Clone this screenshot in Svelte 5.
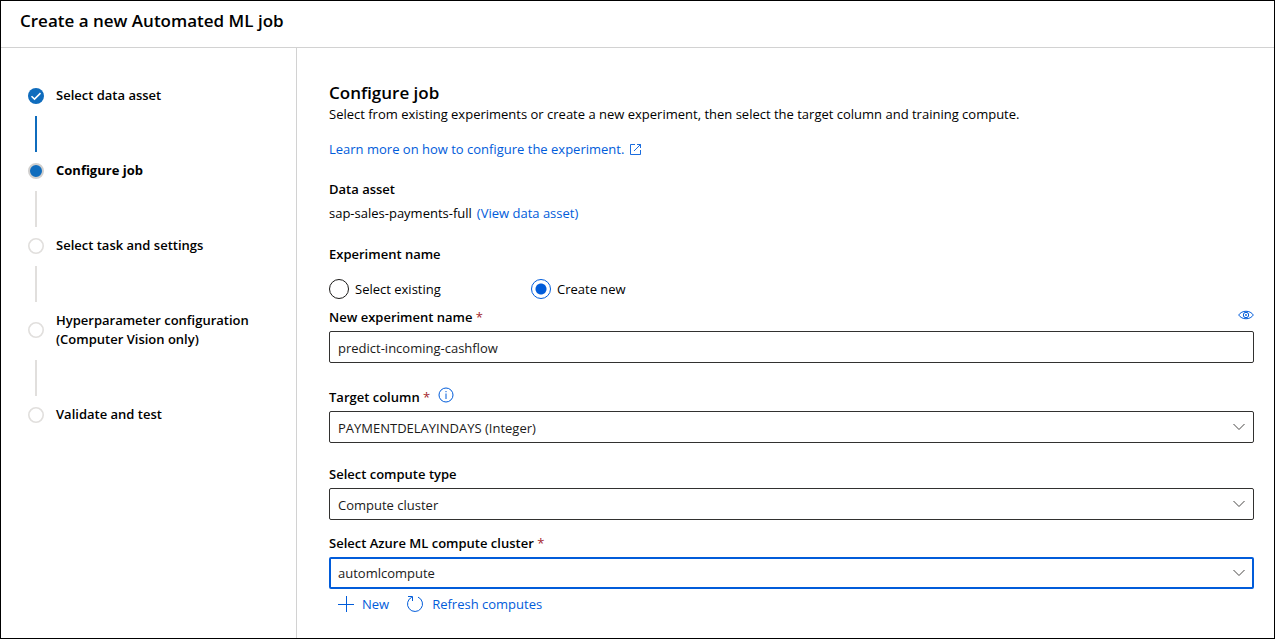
<script>
  const steps = [
    { label: 'Select data asset', state: 'done' },
    { label: 'Configure job', state: 'current' },
    { label: 'Select task and settings', state: 'todo' },
    { label: 'Hyperparameter configuration (Computer Vision only)', state: 'todo' },
    { label: 'Validate and test', state: 'todo' }
  ];

  let mode = $state('new');
  let experiment = $state('predict-incoming-cashflow');
</script>

{#snippet chevron()}
  <svg class="chevron" width="12" height="8" viewBox="0 0 12 8" aria-hidden="true">
    <path d="M0.5 1 L6 6.5 L11.5 1" fill="none" stroke="currentColor" stroke-width="1" />
  </svg>
{/snippet}

<div class="frame">
  <header><h1>Create a new Automated ML job</h1></header>
  <div class="body">
    <nav>
      <ol>
        {#each steps as step}
          <li class={step.state}>
            <div class="step">
              <svg width="16" height="16" viewBox="0 0 16 16" aria-hidden="true">
                {#if step.state === 'done'}
                  <circle cx="8" cy="8" r="8" fill="#0f6cbd" />
                  <path d="M3.5 8.3 L6.5 11.1 L12.5 5.1" fill="none" stroke="#fff" stroke-width="1.5" />
                {:else if step.state === 'current'}
                  <circle cx="8" cy="8" r="7" fill="#0f6cbd" stroke="#d0cfce" stroke-width="2" />
                {:else}
                  <circle cx="8" cy="8" r="7.2" fill="#fff" stroke="#e1dfdd" stroke-width="1.6" />
                {/if}
              </svg>
              <span>{step.label}</span>
            </div>
          </li>
        {/each}
      </ol>
    </nav>

    <main>
      <h2>Configure job</h2>
      <p>Select from existing experiments or create a new experiment, then select the target column and training compute.</p>
      <a class="learn" href="#learn">Learn more on how to configure the experiment.
        <svg width="11" height="11" viewBox="0 0 11 11" aria-hidden="true">
          <path d="M5 0.5 H0.5 V10.5 H10.5 V6 M7 0.5 H10.5 V4 M10.5 0.5 L4 7" fill="none" stroke="currentColor" stroke-width="0.9" />
        </svg>
      </a>

      <h3>Data asset</h3>
      <p class="asset">sap-sales-payments-full <a href="#asset">(View data asset)</a></p>

      <fieldset>
        <legend>Experiment name</legend>
        <div class="radios">
          <label><input type="radio" name="mode" value="existing" bind:group={mode} />Select existing</label>
          <label><input type="radio" name="mode" value="new" bind:group={mode} />Create new</label>
        </div>
      </fieldset>

      <div class="field name">
        <div class="label-row">
          <label for="experiment">New experiment name <span class="req">*</span></label>
          <button class="icon push" aria-label="Preview">
            <svg width="16" height="10" viewBox="0 0 16 10" aria-hidden="true">
              <path d="M0.7 5 C3.8 0 12.2 0 15.3 5 C12.2 10 3.8 10 0.7 5 Z" fill="none" stroke="currentColor" stroke-width="1" />
              <circle cx="8" cy="5" r="2.7" fill="none" stroke="currentColor" stroke-width="1" />
              <circle cx="8" cy="5" r="0.9" fill="currentColor" />
            </svg>
          </button>
        </div>
        <input id="experiment" type="text" bind:value={experiment} />
      </div>

      <div class="field target">
        <div class="label-row">
          <label for="target">Target column <span class="req">*</span></label>
          <button class="icon" aria-label="About the target column">
            <svg width="16" height="16" viewBox="0 0 16 16" aria-hidden="true">
              <circle cx="8" cy="8" r="7" fill="none" stroke="currentColor" stroke-width="1" />
              <path d="M8 6.5 V12 M8 4 V5.2" stroke="currentColor" stroke-width="1" />
            </svg>
          </button>
        </div>
        <div class="select">
          <select id="target"><option>PAYMENTDELAYINDAYS (Integer)</option></select>
          {@render chevron()}
        </div>
      </div>

      <div class="field type">
        <label for="type">Select compute type</label>
        <div class="select">
          <select id="type"><option>Compute cluster</option></select>
          {@render chevron()}
        </div>
      </div>

      <div class="field cluster">
        <label for="cluster">Select Azure ML compute cluster <span class="req">*</span></label>
        <div class="select">
          <select id="cluster" class="active"><option>automlcompute</option></select>
          {@render chevron()}
        </div>
      </div>

      <div class="actions">
        <button>
          <svg width="16" height="16" viewBox="0 0 16 16" aria-hidden="true">
            <path d="M8.5 0 V16 M0 8.5 H16" stroke="currentColor" stroke-width="1" />
          </svg>
          New
        </button>
        <button>
          <svg width="18" height="18" viewBox="0 0 18 18" aria-hidden="true">
            <path d="M12 2.1 A7.5 7.5 0 1 1 5.8 2.2 M2 1.5 H6.5 V6" fill="none" stroke="currentColor" stroke-width="1" />
          </svg>
          Refresh computes
        </button>
      </div>
    </main>
  </div>
</div>

<style>
  :global(body) {
    background: #fff;
  }
  .frame {
    box-sizing: border-box;
    min-height: 100vh;
    border: 1px solid #000;
    display: flex;
    flex-direction: column;
    font: 13px/20px "Open Sans", "Noto Sans", sans-serif;
    color: #000;
  }
  h1, h2, h3, p, ol, fieldset, legend {
    margin: 0;
    padding: 0;
    border: 0;
    font-size: inherit;
  }
  header {
    padding: 8px 19px 14px;
    border-bottom: 1px solid #d2d2d2;
  }
  h1, h2 {
    font-size: 17px;
    line-height: 24px;
    font-weight: 600;
  }
  .body {
    flex: 1;
    display: flex;
  }
  nav {
    box-sizing: border-box;
    flex: none;
    width: 296px;
    padding: 38px 27px;
    border-right: 1px solid #d2d2d2;
  }
  ol {
    list-style: none;
  }
  .step {
    display: flex;
    align-items: center;
    gap: 12px;
    line-height: 19px;
    font-weight: 600;
  }
  .step svg {
    flex: none;
  }
  .step span {
    max-width: 200px;
  }
  .current .step {
    font-weight: 700;
  }
  li:not(:last-child)::after {
    content: "";
    display: block;
    width: 2px;
    height: 36px;
    margin: 11px 7px 9px;
    background: #e1dfdd;
  }
  li.done::after {
    background: #0f6cbd;
  }
  main {
    flex: 1;
    min-width: 0;
    padding: 33px 20px 24px 32px;
  }
  h2 {
    line-height: 23px;
  }
  a {
    color: #015cda;
    text-decoration: none;
  }
  .learn {
    display: flex;
    align-items: center;
    gap: 6px;
    margin-top: 15px;
  }
  h3, legend, .field label {
    font-weight: 600;
  }
  h3 {
    margin-top: 20px;
  }
  .asset {
    display: flex;
    gap: 5px;
    margin-top: 4px;
  }
  fieldset {
    margin-top: 21px;
  }
  .radios {
    display: flex;
    padding-top: 15px;
  }
  .radios label {
    display: flex;
    align-items: center;
    gap: 6px;
    width: 202px;
  }
  input[type="radio"] {
    appearance: none;
    box-sizing: border-box;
    width: 20px;
    height: 20px;
    margin: 0;
    border: 1px solid #1b1a19;
    border-radius: 50%;
  }
  input[type="radio"]:checked {
    border-color: #015cda;
    background: radial-gradient(circle, #015cda 5px, transparent 6px);
  }
  .field {
    display: flex;
    flex-direction: column;
    gap: 4px;
  }
  .name {
    margin-top: 8px;
  }
  .target {
    margin-top: 24px;
  }
  .type {
    margin-top: 21px;
  }
  .cluster {
    margin-top: 13px;
  }
  .label-row {
    display: flex;
    align-items: flex-start;
    gap: 8px;
  }
  .req {
    color: #a4262c;
    font-weight: 400;
  }
  button {
    display: flex;
    align-items: center;
    gap: 8px;
    padding: 0;
    border: 0;
    background: none;
    color: #015cda;
    font: inherit;
  }
  .icon {
    height: 16px;
  }
  .push {
    margin-left: auto;
  }
  input[type="text"], select {
    appearance: none;
    box-sizing: border-box;
    width: 100%;
    height: 32px;
    margin: 0;
    padding: 1px 8px 0;
    border: 1px solid #323130;
    border-radius: 2px;
    background: #fff;
    color: #1b1a19;
    font: inherit;
    outline: none;
  }
  .select {
    display: grid;
    align-items: center;
  }
  .select > :global(*) {
    grid-area: 1 / 1;
  }
  select.active {
    border: 2px solid #015cda;
    padding: 0 7px;
  }
  .chevron {
    justify-self: end;
    margin-right: 9px;
    color: #484644;
    pointer-events: none;
  }
  .actions {
    display: flex;
    gap: 17px;
    margin-top: 5px;
    padding-left: 9px;
  }
</style>
